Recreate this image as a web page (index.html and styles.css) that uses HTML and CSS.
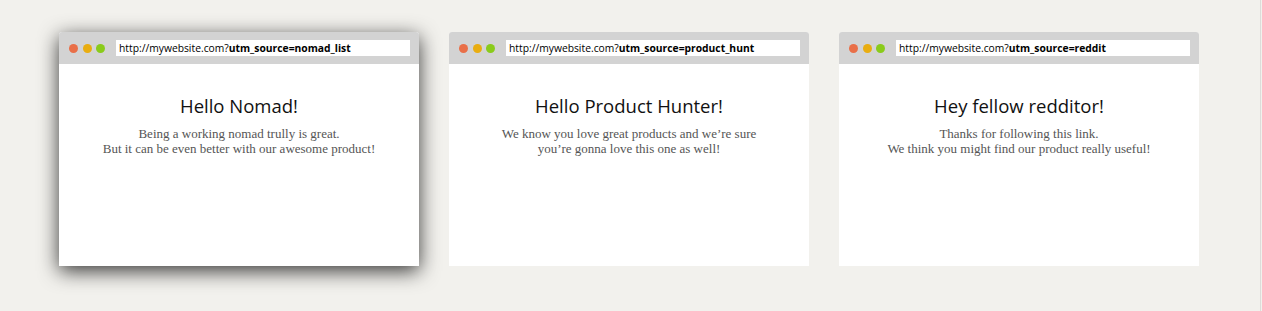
FILE: index.html
```html
<!DOCTYPE html>
<html>
<head>
<meta charset="utf-8">
<link rel="stylesheet" href="styles.css">
</head>
<body>
<div class="page">
  <div class="row">
    <div class="browser browser--lifted">
      <div class="bar">
        <span class="dot dot--red"></span>
        <span class="dot dot--yellow"></span>
        <span class="dot dot--green"></span>
        <div class="url">http://mywebsite.com?<b>utm_source=nomad_list</b></div>
      </div>
      <div class="content">
        <h2 class="title">Hello Nomad!</h2>
        <p class="text">Being a working nomad trully is great.<br>But it can be even better with our awesome product!</p>
      </div>
    </div>
    <div class="browser">
      <div class="bar">
        <span class="dot dot--red"></span>
        <span class="dot dot--yellow"></span>
        <span class="dot dot--green"></span>
        <div class="url">http://mywebsite.com?<b>utm_source=product_hunt</b></div>
      </div>
      <div class="content">
        <h2 class="title">Hello Product Hunter!</h2>
        <p class="text">We know you love great products and we’re sure<br>you’re gonna love this one as well!</p>
      </div>
    </div>
    <div class="browser">
      <div class="bar">
        <span class="dot dot--red"></span>
        <span class="dot dot--yellow"></span>
        <span class="dot dot--green"></span>
        <div class="url">http://mywebsite.com?<b>utm_source=reddit</b></div>
      </div>
      <div class="content">
        <h2 class="title">Hey fellow redditor!</h2>
        <p class="text">Thanks for following this link.<br>We think you might find our product really useful!</p>
      </div>
    </div>
  </div>
</div>
</body>
</html>
```
FILE: styles.css
```css
html, body {
  margin: 0;
  padding: 0;
}
body {
  background: #f2f1ed;
  width: 1262px;
  height: 311px;
  overflow: hidden;
}
.page {
  box-sizing: border-box;
  width: 1261px;
  height: 311px;
  border-right: 1px solid #dddcd9;
  padding: 32px 0 0 59px;
}
.row {
  display: flex;
  gap: 30px;
}
.browser {
  width: 360px;
  height: 234px;
  background: #fff;
  border-radius: 3px 3px 0 0;
  display: flex;
  flex-direction: column;
}
.browser--lifted {
  box-shadow: 0 5px 20px rgba(0, 0, 0, 0.78);
}
.bar {
  height: 32px;
  background: #d3d3d3;
  border-radius: 3px 3px 0 0;
  display: flex;
  align-items: center;
  padding: 0 9px 0 10px;
  gap: 4.5px;
}
.dot {
  width: 9px;
  height: 9px;
  border-radius: 50%;
  flex: none;
}
.dot--red { background: #e96f48; }
.dot--yellow { background: #e9ad10; }
.dot--green { background: #8acb1a; }
.url {
  margin-left: 6.5px;
  flex: 1;
  height: 16px;
  background: #fff;
  font-family: "Open Sans", sans-serif;
  font-size: 10.3px;
  line-height: 16px;
  color: #000;
  padding-left: 3px;
  white-space: nowrap;
  overflow: hidden;
}
.url b {
  font-weight: 700;
}
.content {
  text-align: center;
  padding-top: 30px;
}
.title {
  margin: 0;
  font-family: "Open Sans", sans-serif;
  font-weight: 400;
  font-size: 18.5px;
  line-height: 24px;
  color: #111;
}
.text {
  margin: 9px 0 0;
  font-family: "Liberation Serif", serif;
  font-size: 13px;
  line-height: 14.5px;
  color: #555;
}
```
